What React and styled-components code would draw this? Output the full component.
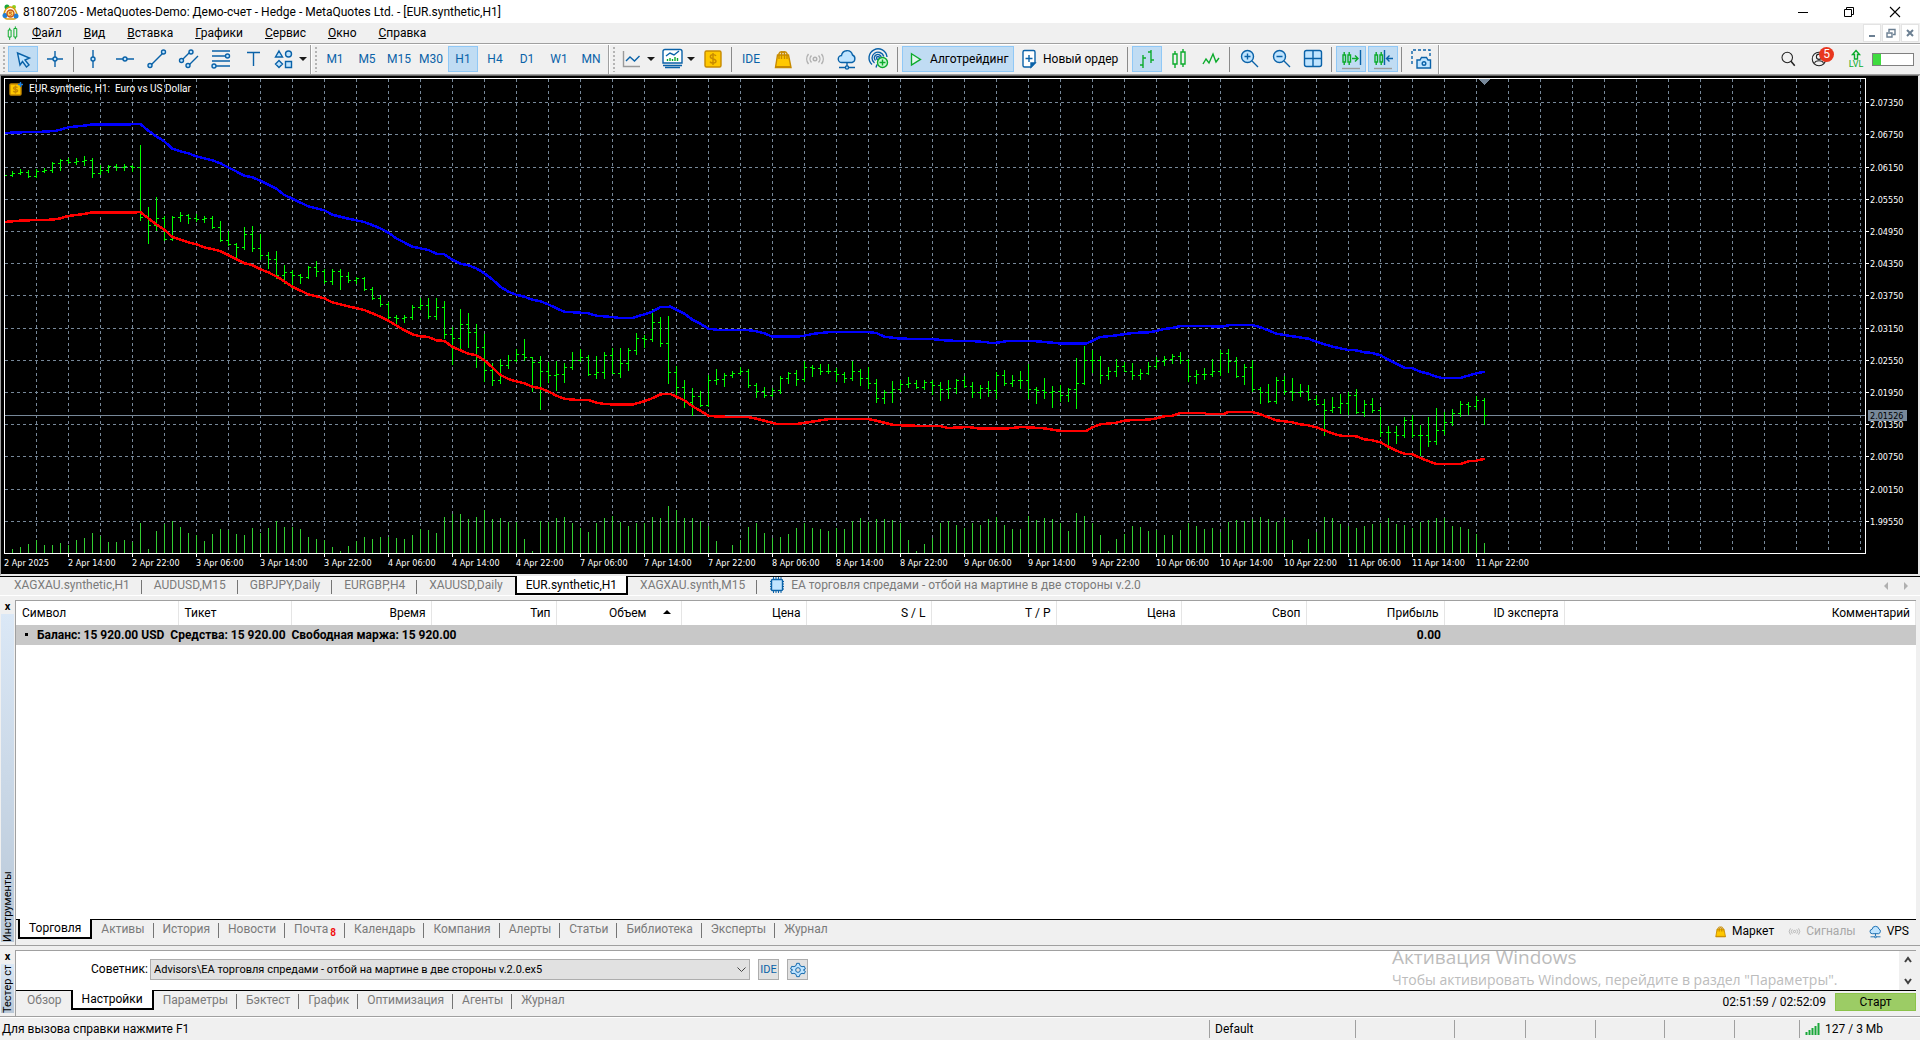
import React from "react";
import styled, { createGlobalStyle } from "styled-components";

const UI_FONT = 'Roboto, "Open Sans", "Noto Sans", sans-serif';
const CHART_FONT = '"DejaVu Sans Condensed", "Open Sans", sans-serif';
const BLUE = "#0a62a8";
const PALE = "#bfe4ff";
const GREEN = "#0cab2c";
const GRID = "#778899";

const GlobalStyle = createGlobalStyle`
  * { box-sizing: border-box; }
  body { margin: 0; background: #f0f0f0; color: #000; font: 12px/16px ${UI_FONT}; }
  button, select { font: inherit; color: inherit; margin: 0; }
  button { border: 0; background: none; padding: 0; }
`;

/* ---------- chart data ---------- */

// Every row is high, low, close; a bar opens at the close before it.
const scaleRows = (top, rows) => rows.map((r) => r.map((v) => top + Math.floor(v / 3)));

const BARS = [
  ...scaleRows(100, [
    [226, 226, 226], [215, 231, 220], [207, 225, 217], [210, 234, 229], [207, 234, 214], [204, 219, 211],
    [186, 219, 190], [177, 213, 181], [174, 192, 187], [174, 195, 184], [168, 198, 181], [174, 234, 220],
    [195, 225, 211], [195, 219, 199], [192, 213, 202], [192, 213, 199], [195, 216, 202], [135, 363, 352],
    [321, 432, 376], [291, 394, 355], [348, 424, 418], [348, 423, 352], [336, 366, 346], [342, 372, 355],
    [342, 366, 358], [348, 369, 355], [348, 387, 382], [363, 426, 421], [393, 438, 433], [429, 474, 442],
    [381, 450, 403], [378, 456, 445], [402, 480, 466], [456, 507, 478], [453, 537, 526], [495, 552, 517],
    [510, 567, 526], [522, 552, 532], [498, 537, 502], [483, 531, 514], [507, 552, 544], [507, 555, 514],
    [507, 570, 529], [516, 549, 541], [531, 552, 535], [531, 573, 568], [561, 600, 595], [585, 621, 613],
    [606, 657, 652], [645, 678, 655], [645, 669, 652], [615, 660, 622], [594, 630, 616], [594, 657, 649],
    [594, 660, 622], [603, 717, 703], [681, 795, 715], [627, 747, 673], [639, 744, 697], [672, 804, 742],
    [702, 846, 811], [789, 858, 841], [777, 852, 796], [765, 807, 781],
  ]),
  ...scaleRows(260, [
    [269, 307, 283], [237, 303, 292], [292, 396, 307], [288, 450, 334], [308, 369, 346], [303, 393, 343],
    [309, 369, 322], [276, 330, 300], [268, 308, 292], [285, 348, 343], [288, 357, 337], [276, 357, 286],
    [264, 344, 340], [264, 354, 310], [264, 333, 271], [219, 285, 235], [225, 265, 238], [147, 246, 187],
    [171, 261, 250], [168, 372, 337], [318, 405, 382], [360, 444, 427], [384, 468, 409], [393, 441, 436],
    [345, 441, 361], [327, 375, 358], [339, 381, 346], [333, 354, 340], [322, 346, 333], [327, 384, 376],
    [369, 414, 394], [381, 414, 406], [384, 411, 391], [348, 402, 355], [336, 372, 340], [330, 378, 358],
    [304, 366, 322], [315, 351, 324], [312, 345, 334], [312, 342, 334], [324, 366, 343], [336, 369, 355],
    [303, 364, 334], [327, 378, 355], [322, 387, 370], [357, 429, 415], [390, 432, 397], [363, 429, 388],
    [361, 397, 373], [351, 384, 370], [360, 387, 382], [360, 390, 367], [360, 405, 376], [366, 423, 388],
    [360, 417, 385], [357, 402, 361], [350, 385, 379], [366, 414, 397],
  ]),
  ...scaleRows(300, [
    [256, 297, 265], [243, 291, 271], [216, 299, 226], [210, 258, 250], [225, 261, 241], [213, 267, 241],
    [192, 297, 268], [261, 312, 271], [234, 297, 277], [258, 324, 274], [255, 306, 286], [264, 306, 268],
    [174, 327, 250], [138, 255, 181], [151, 219, 181], [168, 252, 226], [201, 240, 214], [177, 231, 199],
    [187, 217, 214], [189, 240, 226], [207, 240, 220], [186, 225, 199], [172, 207, 184], [168, 198, 178],
    [162, 192, 169], [156, 192, 181], [178, 246, 229], [210, 252, 223], [204, 240, 223], [177, 231, 214],
    [152, 228, 160], [147, 219, 184], [171, 234, 229], [192, 255, 202], [182, 276, 268], [261, 312, 277],
    [252, 309, 303], [231, 312, 241], [228, 285, 274], [234, 303, 277], [252, 291, 274], [255, 303, 298],
    [286, 316, 312], [297, 408, 331], [291, 339, 322], [282, 342, 310], [277, 347, 286], [267, 342, 337],
    [300, 351, 313], [294, 339, 331], [321, 411, 397], [378, 450, 397], [378, 432, 406], [351, 414, 361],
    [347, 414, 406], [375, 468, 406], [351, 441, 424], [324, 435, 391], [336, 405, 367], [327, 378, 340],
    [303, 351, 313], [306, 347, 319], [290, 330, 301], [294, 375, 346],
  ]),
];

const scaleList = (top, list) => list.map((v) => top + Math.floor(v / 3));

const VOLUMES = [
  ...scaleList(480, [
    219, 207, 201, 192, 180, 195, 195, 189, 195, 180, 174, 159, 169, 186, 186, 180, 186, 129, 207, 153, 132,
    124, 141, 159, 165, 183, 162, 147, 150, 162, 165, 144, 159, 144, 125, 141, 141, 147, 171, 177, 181, 201,
    213, 198, 183, 171, 177, 171, 171, 174, 177, 165, 147, 150, 159,
  ]),
  ...scaleList(260, [
    771, 762, 762, 777, 771, 750, 777, 774, 786, 788, 837, 873, 783, 786, 774, 771, 789, 804, 816, 789, 774,
    769, 786, 798, 789, 790, 771, 774, 738, 750, 774, 774, 784, 798, 843, 879, 855, 842, 801, 789, 819, 834,
    831, 822, 804, 790, 804, 807, 813, 804, 807, 783, 774, 786, 777, 777, 780, 790, 840, 873, 852, 834, 789,
    783, 795, 804, 789,
  ]),
  ...scaleList(300, [
    675, 657, 651, 675, 687, 687, 648, 660, 654, 657, 669, 693, 639, 648, 669, 705, 753, 717, 703, 678, 681,
    693, 692, 705, 705, 690, 669, 678, 687, 684, 696, 666, 660, 663, 657, 651, 657, 666, 655, 720, 756, 717,
    696, 651, 654, 672, 678, 684, 678, 672, 669, 654, 672, 675, 686, 666, 660, 654, 655, 678, 681, 687, 702,
    729,
  ]),
];

const segment = (left, stepX, top, pairs) => pairs.map(([x, y]) => [left + x / stepX, top + y / 3]);

const UPPER = [
  ...segment(0, 3, 100, [
    [13, 99], [61, 97], [133, 95], [170, 92], [205, 82], [250, 77], [280, 73], [350, 74], [421, 72], [445, 92],
    [469, 109], [493, 124], [517, 146], [541, 154], [565, 160], [589, 169], [637, 181], [661, 190], [685, 202],
    [733, 227], [757, 232], [781, 242], [829, 266], [853, 285], [877, 296], [925, 319], [973, 331], [997, 344],
    [1045, 356], [1093, 366], [1141, 385], [1165, 398], [1189, 415], [1237, 440], [1285, 450], [1309, 461],
    [1333, 463], [1357, 479], [1381, 491], [1405, 496], [1429, 505], [1453, 520], [1477, 538], [1501, 560],
    [1525, 575],
  ]),
  ...segment(440, 2.8, 260, [
    [213, 104], [236, 110], [259, 119], [281, 124], [303, 133], [326, 145], [348, 155], [393, 158], [415, 160],
    [438, 167], [482, 171], [505, 174], [538, 174], [572, 163], [594, 155], [617, 141], [645, 140], [662, 149],
    [684, 161], [707, 179], [729, 191], [751, 206], [780, 210], [860, 210], [886, 214], [908, 220], [931, 230],
    [998, 230], [1020, 227], [1042, 222], [1065, 219], [1095, 216], [1199, 216], [1222, 219], [1244, 230],
    [1289, 236], [1378, 237], [1423, 242], [1490, 243], [1535, 247],
  ]),
  ...segment(980, 2.8, 300, [
    [23, 129], [50, 128], [75, 123], [150, 123], [202, 128], [230, 131], [297, 131], [315, 122], [337, 111],
    [375, 107], [427, 99], [472, 97], [494, 93], [516, 87], [539, 84], [561, 78], [628, 78], [678, 80],
    [700, 75], [763, 75], [785, 82], [807, 91], [830, 101], [875, 109], [919, 116], [942, 125], [987, 140],
    [1031, 150], [1054, 151], [1076, 157], [1098, 159], [1121, 166], [1143, 179], [1188, 203], [1211, 205],
    [1233, 215], [1255, 221], [1278, 230], [1295, 234], [1345, 234], [1367, 227], [1390, 220], [1414, 215],
  ]),
];

const LOWER = [
  ...segment(0, 3, 100, [
    [13, 366], [61, 362], [109, 360], [157, 359], [181, 355], [205, 348], [253, 342], [270, 338], [397, 338],
    [421, 336], [445, 355], [469, 373], [493, 389], [517, 411], [541, 419], [565, 427], [589, 433], [613, 442],
    [661, 453], [709, 478], [733, 490], [757, 495], [781, 508], [805, 517], [829, 529], [853, 544], [877, 560],
    [925, 583], [973, 595], [997, 607], [1045, 619], [1093, 630], [1141, 650], [1165, 662], [1213, 691],
    [1237, 703], [1261, 709], [1285, 711], [1309, 721], [1333, 723], [1357, 740], [1381, 751], [1405, 761],
    [1429, 766], [1453, 781], [1477, 802], [1501, 825], [1525, 837],
  ]),
  ...segment(440, 2.8, 260, [
    [213, 364], [236, 370], [259, 380], [281, 385], [303, 394], [326, 407], [348, 416], [370, 419], [415, 420],
    [438, 428], [460, 432], [505, 434], [538, 434], [572, 424], [594, 415], [617, 403], [645, 402], [662, 410],
    [684, 421], [707, 439], [729, 452], [751, 467], [780, 470], [863, 471], [886, 476], [908, 482], [931, 489],
    [945, 492], [998, 492], [1031, 487], [1065, 481], [1090, 477], [1199, 477], [1222, 482], [1266, 494],
    [1311, 497], [1400, 498], [1423, 504], [1480, 501], [1513, 506],
  ]),
  ...segment(980, 2.8, 300, [
    [0, 386], [68, 386], [115, 381], [180, 385], [202, 389], [230, 393], [297, 393], [315, 382], [337, 373],
    [382, 368], [404, 362], [427, 360], [472, 359], [494, 355], [516, 349], [539, 347], [561, 339], [628, 339],
    [635, 342], [683, 342], [695, 336], [763, 336], [785, 343], [807, 352], [830, 361], [875, 367], [897, 373],
    [919, 376], [942, 382], [964, 391], [987, 400], [1009, 407], [1054, 409], [1076, 418], [1098, 421],
    [1121, 427], [1143, 440], [1166, 452], [1188, 461], [1211, 463], [1233, 474], [1255, 483], [1278, 492],
    [1345, 492], [1367, 484], [1390, 482], [1414, 476],
  ]),
];

const PRICES = [
  ["2.07350", 102], ["2.06750", 134], ["2.06150", 167], ["2.05550", 199], ["2.04950", 231], ["2.04350", 263],
  ["2.03750", 295], ["2.03150", 328], ["2.02550", 360], ["2.01950", 392], ["2.01350", 424], ["2.00750", 456],
  ["2.00150", 489], ["1.99550", 521],
];

const TIMES = [
  ["2 Apr 2025", 4],
  ...["2 Apr 14:00", "2 Apr 22:00", "3 Apr 06:00", "3 Apr 14:00", "3 Apr 22:00", "4 Apr 06:00", "4 Apr 14:00",
    "4 Apr 22:00", "7 Apr 06:00", "7 Apr 14:00", "7 Apr 22:00", "8 Apr 06:00", "8 Apr 14:00", "8 Apr 22:00",
    "9 Apr 06:00", "9 Apr 14:00", "9 Apr 22:00", "10 Apr 06:00", "10 Apr 14:00", "10 Apr 22:00", "11 Apr 06:00",
    "11 Apr 14:00", "11 Apr 22:00"].map((t, i) => [t, 68 + 64 * i]),
];

const barX = (i) => 4 + 8 * i;
const barPath = BARS.map(([h, l, c], i) => {
  const x = barX(i);
  const open = i ? `M${x - 2} ${BARS[i - 1][2] + 0.5}H${x}` : "";
  const stem = i ? `M${x + 0.5} ${h}V${l}` : "";
  return `${open}${stem}M${x + 1} ${c + 0.5}H${x + 3}`;
}).join("");
const volumePath = VOLUMES.map((v, i) => `M${barX(i) + 0.5} ${v}V553`).join("");
const bandPath = (pts) => "M" + pts.map(([x, y]) => `${x.toFixed(1)} ${y.toFixed(1)}`).join("L");
const gridV = Array.from({ length: 58 }, (_, i) => `M${36.5 + 32 * i} 79V553`).join("");
const gridH = PRICES.map(([, y]) => `M5 ${y + 0.5}H1865`).join("");

/* ---------- icons ---------- */

const Svg = styled.svg`
  display: block;
  flex: none;
  overflow: visible;
  fill: none;
  stroke: ${(p) => p.$c || BLUE};
  stroke-width: 1.4;
`;

const Icon = ({ size = 24, color, box = 24, children }) => (
  <Svg width={size} height={size} viewBox={`0 0 ${box} ${box}`} $c={color} aria-hidden="true">
    {children}
  </Svg>
);

const Bag = ({ size }) => (
  <Icon size={size} color="#c78a00">
    <path d="M6.500 8h11l2.500 12.500H4.500z" fill="#ffc800" />
    <path d="M8 12V6.500a3 3 0 0 1 5.500 0V12M10.500 12V6.500a3 3 0 0 1 5.500 0V12M4.500 19.800H20" />
  </Icon>
);
const Cloud = ({ size }) => (
  <Icon size={size}>
    <path d="M7 15.500a3.500 3.500 0 0 1-.500-7 5.600 5.600 0 0 1 11-.500 4 4 0 0 1-.500 7.500z" fill={PALE} />
    <path d="M12 15.500V19M4 20.500h6m4 0h6" />
    <circle cx="12" cy="20.500" r="1.600" fill={PALE} />
  </Icon>
);
const Waves = ({ size }) => (
  <Icon size={size} color="#b0b0b0">
    <circle cx="12" cy="12" r="1.800" />
    <path d="M8.500 8.500a5 5 0 0 0 0 7M15.500 8.500a5 5 0 0 1 0 7M5.500 7a8 8 0 0 0 0 10M18.500 7a8 8 0 0 1 0 10" />
  </Icon>
);
const Candles = ({ size }) => (
  <Icon size={size} color={GREEN}>
    <path d="M6 7h4v10H6zM8 4v3M8 17v4M14 5h4v12h-4zM16 2v3M16 17v3" />
  </Icon>
);

const ICONS = {
  cursor: <Icon><path d="M6.500 6l12 5-4.500 2 4 5-2.500 2-4-5.500-2.500 3.500z" fill={PALE} /></Icon>,
  cross: <Icon><path d="M12 4v6M12 14v6M4 12h6M14 12h6" /><circle cx="12" cy="12" r="2" fill={PALE} /></Icon>,
  vline: <Icon><path d="M12 3v7M12 14v7" /><circle cx="12" cy="12" r="2" fill={PALE} /></Icon>,
  hline: <Icon><path d="M3 12h7M14 12h7" /><circle cx="12" cy="12" r="2" fill={PALE} /></Icon>,
  trend: <Icon><path d="M6 18L18 6" /><circle cx="5" cy="18.500" r="2" fill={PALE} /><circle cx="18.500" cy="5" r="2" fill={PALE} /></Icon>,
  channel: (
    <Icon>
      <path d="M5 13l8-8M12 18l9-9" />
      <circle cx="4.500" cy="13.500" r="2" fill={PALE} /><circle cx="14" cy="5" r="2" fill={PALE} />
      <circle cx="11" cy="18.500" r="2" fill={PALE} />
    </Icon>
  ),
  fibo: (
    <Icon>
      <path d="M3 4h18M3 9h14M3 14h18M7 19h14" />
      <circle cx="18.500" cy="9" r="2" fill={PALE} /><circle cx="5" cy="19" r="2" fill={PALE} />
    </Icon>
  ),
  text: <Icon><path d="M6 5.500h13M12.500 5.500V19" /></Icon>,
  shapes: (
    <Icon>
      <path d="M7 4l3.500 6h-7zM7 13.500l3.500 3.500L7 20.500l-3.500-3.500zM13.500 14.500h6v6h-6z" fill={PALE} />
      <circle cx="16.500" cy="7" r="3" fill={PALE} />
    </Icon>
  ),
  linechart: <Icon><path d="M3.500 4v15.500H20" stroke="#9a9a9a" /><path d="M6 14l4-4 4.500 4 5-5" /></Icon>,
  indicators: (
    <Icon>
      <path d="M5 2.500h15a2 2 0 0 1 2 2V16H3V4.500a2 2 0 0 1 2-2z" fill="#fff" />
      <path d="M6 9l4-3 4 2 5-4M3 18.500h19M5 20.500h15" />
      <path d="M7.500 14v-2M10 14v-3M12.500 14v-2M15 14v-4M17.500 14v-3" stroke={GREEN} />
    </Icon>
  ),
  dollar: (
    <Icon color="#c78a00">
      <rect x="4" y="4" width="16" height="16" rx="1.500" fill="#ffc800" />
      <path d="M15 9c-1-1.800-5.700-2-5.700.8 0 2.800 5.700 1.600 5.700 4.400 0 2.400-5 2.400-6 .4M12 6v12" />
    </Icon>
  ),
  bag: <Bag />,
  waves: <Waves />,
  cloud: <Cloud />,
  radar: (
    <Icon>
      <circle cx="11" cy="11" r="1.500" />
      <path d="M7.500 16a6 6 0 1 1 9.300-6.500M8.500 13.500a3.500 3.500 0 1 1 5.800-3M5 17.500A9 9 0 1 1 20 10M10 17.500l-1 3" />
      <circle cx="15.500" cy="15.500" r="5" stroke={GREEN} fill="#c9f7cf" />
      <path d="M15.500 12.500v6M12.500 15.500h6" stroke={GREEN} />
    </Icon>
  ),
  play: <Icon size={18} color={GREEN}><path d="M6 5l12 7.500L6 20z" fill="#e2f6ee" strokeWidth="1.800" /></Icon>,
  order: (
    <Icon>
      <path d="M7.500 3.500h9a1.500 1.500 0 0 1 1.500 1.500v11l-4 4H7.500A1.500 1.500 0 0 1 6 18.500V5a1.500 1.500 0 0 1 1.500-1.500z" fill="#fff" />
      <path d="M14 20v-4h4z" fill={BLUE} />
      <path d="M12 8v7M8.500 11.500h7" />
    </Icon>
  ),
  bars: <Icon color={GREEN}><path d="M8 8v13M5 18h3M8 11h3M16 3v13M13 5h3M16 13h3" /></Icon>,
  candles: <Candles />,
  zigzag: <Icon color={GREEN}><path d="M4 17l3-5 3 4 4-9 3 8 3-4" /></Icon>,
  zoomin: <Icon><circle cx="10.500" cy="9.500" r="6" fill={PALE} /><path d="M10.500 6.500v6M7.500 9.500h6M15 14l6 6" /></Icon>,
  zoomout: <Icon><circle cx="10.500" cy="9.500" r="6" fill={PALE} /><path d="M7.500 9.500h6M15 14l6 6" /></Icon>,
  tiles: <Icon><rect x="3.500" y="3.500" width="17" height="16" rx="2" fill={PALE} /><path d="M12 3.500v16M3.500 11.500h17" /></Icon>,
  shiftEnd: (
    <Icon color={GREEN}>
      <path d="M4 8h2.500v7H4zM5.200 5v3M5.200 15v3M9 8h2.500v7H9zM10.200 5v3M10.200 15v3M13 11.500h6M16 8.500l3 3-3 3" />
      <path d="M21.500 3v15" stroke={BLUE} /><path d="M3 21.500h18" stroke="#9c9c9c" />
    </Icon>
  ),
  shift: (
    <Icon color={GREEN}>
      <path d="M4 8h2.500v7H4zM5.200 5v3M5.200 15v3M9 8h2.500v7H9zM10.200 5v3M10.200 15v3" />
      <path d="M13.500 3v15M22 11.500h-6M18.500 8.500l-3 3 3 3" stroke={BLUE} /><path d="M3 21.500h18" stroke="#9c9c9c" />
    </Icon>
  ),
  camera: (
    <Icon>
      <path d="M3 17V3h18v6" strokeDasharray="3 2" />
      <path d="M8 13h3l1.500-2.500h5L19 13h2.500v8H8z" fill={PALE} /><circle cx="15" cy="16.500" r="1.800" />
    </Icon>
  ),
};

/* ---------- window frame ---------- */

const Window = styled.div`
  display: flex;
  flex-direction: column;
  min-height: 100vh;
  overflow: hidden;
`;
const TitleBar = styled.header`
  display: flex;
  align-items: center;
  height: 23px;
  padding: 0 2px;
  background: #fff;
`;
const Title = styled.h1`
  flex: 1;
  margin: 0 0 0 4px;
  font-size: 12px;
  font-weight: 400;
  white-space: nowrap;
`;
const CaptionButton = styled.button`
  width: 46px;
  height: 22px;
  display: grid;
  place-items: center;
`;
const MenuBar = styled.nav`
  display: flex;
  align-items: center;
  height: 21px;
  padding-left: 4px;
  border-bottom: 1px solid #a0a0a0;
`;
const MenuItem = styled.button`
  padding: 0 11px;
  white-space: nowrap;
  &::first-letter { text-decoration: underline; }
`;
const Spacer = styled.span`
  flex: 1;
`;
const MdiButton = styled.button`
  display: grid;
  place-items: center;
  width: 18px;
  height: 18px;
  margin-right: 1px;
  background: #fff;
  border: 1px solid #e3e3e3;
`;

/* ---------- toolbar ---------- */

const Toolbar = styled.div`
  display: flex;
  align-items: center;
  gap: 2px;
  height: 31px;
  padding: 0 6px 1px 2px;
  border-top: 1px solid #fff;
  border-bottom: 1px solid #a0a0a0;
`;
const Grip = styled.i`
  flex: none;
  width: 4px;
  height: 26px;
  background: radial-gradient(circle, #b4b4b4 1px, transparent 1px) 0 0 / 4px 4px;
`;
const Divider = styled.i`
  display: flex;
  justify-content: flex-end;
  flex: none;
  width: 8px;
  height: 29px;
  padding-top: 1px;
  border-left: 1px solid #a0a0a0;
  box-shadow: inset 1px 0 #fff;
`;
const Separator = styled.i`
  flex: none;
  width: 1px;
  height: 25px;
  margin: 0 2px 0 1px;
  background: #8a8a8a;
`;
const ToolButton = styled.button`
  display: flex;
  align-items: center;
  justify-content: center;
  flex: none;
  height: 26px;
  min-width: 30px;
  white-space: nowrap;
  color: ${BLUE};
  background: ${(p) => (p.$on ? "#c0dcf3" : "transparent")};
  border: 1px solid ${(p) => (p.$on ? "#90c8f6" : "transparent")};
`;
const DropButton = styled(ToolButton)`
  width: 38px;
  gap: 3px;
`;
const WideButton = styled(ToolButton)`
  justify-content: flex-start;
  gap: ${(p) => (p.$on ? 5 : 2)}px;
  min-width: ${(p) => (p.$on ? 112 : 108)}px;
  padding: 0 4px 0 ${(p) => (p.$on ? 4 : 0)}px;
  color: #000;
`;
const Caret = styled.i`
  border: 4px solid transparent;
  border-top-color: #1a1a1a;
  border-bottom: 0;
`;
const AccountBadge = styled.span`
  position: relative;
`;
const Count = styled.b`
  position: absolute;
  top: -3px;
  right: -6px;
  width: 15px;
  height: 15px;
  border-radius: 8px;
  background: #e8371f;
  color: #fff;
  font-size: 12px;
  line-height: 15px;
  font-weight: 400;
  text-align: center;
`;
const Level = styled.span`
  display: flex;
  flex-direction: column;
  align-items: center;
  width: 20px;
  margin: 0 6px 0 18px;
  font-size: 9px;
  line-height: 9px;
  color: ${GREEN};
`;
const LevelMeter = styled.span`
  width: 42px;
  height: 13px;
  background: linear-gradient(90deg, #3fdc3f 8px, #fff 8px);
  border: 1px solid #808080;
`;
const AccountTools = styled.div`
  display: flex;
  align-items: center;
  margin-left: auto;
`;
const Search = styled.button`
  margin-right: 13px;
`;

/* ---------- chart ---------- */

const ChartFrame = styled.section`
  display: grid;
  grid-template: 476px 20px / minmax(0, 1fr) 52px;
  padding: 2px 0 0 3px;
  background: #000;
  border: solid;
  border-width: 1px 2px 2px 1px;
  border-color: #696969 #e8e8e8 #e8e8e8 #a0a0a0;
  overflow: hidden;
`;
const ChartBox = styled.div`
  position: relative;
  border: 1px solid #fff;
  overflow: hidden;
`;
const Drawing = styled.svg`
  display: block;
  width: 100%;
  height: 100%;
  overflow: ${(p) => (p.$spill ? "visible" : "hidden")};
  fill: none;
  shape-rendering: crispEdges;
  text {
    fill: #fff;
    font: 9px ${CHART_FONT};
  }
`;
const ChartCaption = styled.div`
  position: absolute;
  left: 4px;
  top: 2px;
  display: flex;
  align-items: center;
  gap: 6px;
  color: #fff;
  font-size: 10px;
  white-space: pre;
`;

function Chart() {
  return (
    <ChartFrame>
      <ChartBox>
        <Drawing role="img" aria-label="EUR.synthetic, H1">
          <g transform="translate(-5 -79)">
            <path d={gridV + gridH} stroke={GRID} strokeDasharray="3 3" />
            <path d="M5 415.5H2400" stroke={GRID} />
            <path d={volumePath} stroke="#32cd32" />
            <path d={barPath} stroke="#00ff00" />
            <path d={bandPath(UPPER)} stroke="#0000ff" strokeWidth="2.5" />
            <path d={bandPath(LOWER)} stroke="#ff0000" strokeWidth="2.5" />
            <path d="M1479 79h11l-5.500 6z" fill={GRID} />
          </g>
        </Drawing>
        <ChartCaption>
          <Icon size={14} box={14} color="#c78a00">
            <rect x="1" y="2" width="11" height="11" rx="1" fill="#ffc800" />
            <path d="M8.500 5.500c-1-1-4-.8-4 .8 0 1.700 4.200.8 4.200 2.500 0 1.500-3.500 1.500-4.400.2M6.500 3.500v8" />
            <path d="M9 2.500h5M11.500 0v5" stroke="#1c7fe0" />
          </Icon>
          <span>{"EUR.synthetic, H1:  Euro vs US Dollar"}</span>
        </ChartCaption>
      </ChartBox>
      <Drawing $spill>
        <g transform="translate(-1866 -78)">
          {PRICES.map(([p, y]) => (
            <g key={p}>
              <path d={`M1866 ${y + 0.5}h3`} stroke="#fff" />
              <text x="1870" y={y + 4}>{p}</text>
            </g>
          ))}
          <path d="M1868 410h39v11h-39z" fill={GRID} />
          <text x="1870" y="419" style={{ fill: "#000" }}>2.01526</text>
        </g>
      </Drawing>
      <Drawing $spill>
        <g transform="translate(-4 -554)">
          {TIMES.map(([t, x]) => (
            <g key={t}>
              {x > 4 && <path d={`M${x + 0.5} 554v3`} stroke="#fff" />}
              <text x={x} y="566">{t}</text>
            </g>
          ))}
        </g>
      </Drawing>
    </ChartFrame>
  );
}

/* ---------- tabs ---------- */

const ChartTabs = styled.div`
  display: flex;
  align-items: stretch;
  height: 20px;
  margin-bottom: 4px;
  padding-left: 2px;
  border-top: 1px solid #000;
  border-bottom: 1px solid #fff;
  white-space: nowrap;
`;
const Tab = styled.button`
  display: flex;
  align-items: center;
  gap: 6px;
  position: relative;
  padding: 0 ${(p) => (p.$wide ? 12 : 9)}px ${(p) => (p.$on ? 0 : 2)}px;
  color: ${(p) => (p.$on ? "#000" : "#7a7a7a")};
  background: ${(p) => (p.$on ? "#fff" : "transparent")};
  border: ${(p) => (p.$on ? "solid #000" : "0")};
  border-width: ${(p) => (p.$on ? "0 2px 2px 2px" : "0")};
  ${(p) => p.$on && "margin-top: -1px;"}
  ${(p) => p.$bar && `
    &::after { content: ""; position: absolute; right: 0; top: 3px; bottom: 1px; width: 1px; background: #757575; }
  `}
`;
const Arrow = styled.i`
  align-self: center;
  margin-right: ${(p) => (p.$left ? 16 : 12)}px;
  border: 4px solid transparent;
  ${(p) => (p.$left ? "border-right-color: #b0b0b0; border-left: 0;" : "border-left-color: #b0b0b0; border-right: 0;")}
`;
const Mail = styled.sub`
  margin-left: -4px;
  color: #f01010;
  font-size: 10px;
  line-height: 8px;
  font-weight: 700;
  padding-top: 8px;
`;

/* ---------- docked panels ---------- */

const Dock = styled.section`
  display: flex;
  ${(p) => (p.$grow ? "flex: 1;" : "flex: none;")}
  margin-bottom: ${(p) => (p.$grow ? 4 : 0)}px;
  border-bottom: 1px solid #a0a0a0;
`;
const Side = styled.div`
  display: flex;
  flex-direction: column;
  flex: none;
  width: 15px;
  padding: 0 1px 3px 1px;
`;
const CloseMark = styled.button`
  height: 14px;
  font: 700 11px/10px ${UI_FONT};
`;
const SideLabel = styled.div`
  flex: 1 1 0;
  min-height: 0;
  overflow: hidden;
  writing-mode: vertical-rl;
  transform: rotate(180deg);
  font-size: 11px;
  line-height: 13px;
  white-space: nowrap;
  background: linear-gradient(0deg, #dbe8f6, #b9c8d8);
`;
const Body = styled.div`
  display: flex;
  flex-direction: column;
  flex: 1;
  min-width: 0;
  margin-right: 4px;
  border-top: 1px solid #a0a0a0;
  border-left: 1px solid #a0a0a0;
`;
const Client = styled.div`
  position: relative;
  display: flex;
  flex: 1;
  min-height: ${(p) => p.$h || 0}px;
  background: #fff;
`;
const TabStrip = styled.div`
  display: flex;
  height: 26px;
  padding: 0 0 6px 2px;
  border-top: 1px solid #000;
  white-space: nowrap;
`;
const Service = styled.button`
  display: flex;
  align-items: center;
  gap: 4px;
  height: 22px;
  margin-right: ${(p) => p.$gap}px;
  color: ${(p) => (p.$off ? "#a8a8a8" : "#000")};
`;

const Table = styled.table`
  width: 100%;
  align-self: flex-start;
  table-layout: fixed;
  border-collapse: collapse;
  th, td {
    padding: 0 5px 0 6px;
    text-align: right;
    white-space: nowrap;
  }
  th {
    height: 24px;
    padding-bottom: 1px;
    font-weight: 400;
    border-right: 1px solid #e5e5e5;
  }
  th.left, td.left { text-align: left; }
  td {
    height: 20px;
    padding: 0 3px 1px;
    font-weight: 700;
    background: #c8c8c8;
  }
`;
const SortMark = styled.i`
  display: inline-block;
  margin: 0 5px 3px 16px;
  border: 4px solid transparent;
  border-bottom-color: #000;
  border-top: 0;
`;
const Bullet = styled.i`
  display: inline-block;
  width: 3px;
  height: 3px;
  margin: 0 9px 3px 6px;
  background: #000;
`;

const COLUMNS = [
  ["Символ", 162], ["Тикет", 113], ["Время", 140], ["Тип", 125], ["Объем", 125], ["Цена", 125], ["S / L", 125],
  ["T / P", 125], ["Цена", 125], ["Своп", 125], ["Прибыль", 138], ["ID эксперта", 120], ["Комментарий", 0],
];
const Col = styled.col`
  width: ${(p) => (p.$w ? `${p.$w}px` : "auto")};
`;

function TradeTable() {
  return (
    <Table>
      <colgroup>{COLUMNS.map(([n, w], i) => <Col key={i} $w={w} />)}</colgroup>
      <thead>
        <tr>
          {COLUMNS.map(([n], i) => (
            <th key={i} scope="col" className={i < 2 ? "left" : undefined}>
              {n}{n === "Объем" && <SortMark />}
            </th>
          ))}
        </tr>
      </thead>
      <tbody>
        <tr>
          <td className="left" colSpan={10}>
            <Bullet />Баланс: 15 920.00 USD&nbsp; Средства: 15 920.00&nbsp; Свободная маржа: 15 920.00
          </td>
          <td>0.00</td>
          <td colSpan={2} />
        </tr>
      </tbody>
    </Table>
  );
}

/* ---------- tester ---------- */

const Form = styled.form`
  display: flex;
  align-items: flex-start;
  flex: 1;
  padding: 8px 0 0 75px;
`;
const FieldLabel = styled.label`
  width: 59px;
  line-height: 20px;
`;
const SelectWrap = styled.span`
  position: relative;
  width: 600px;
  svg { position: absolute; right: 4px; top: 6px; pointer-events: none; }
`;
const Select = styled.select`
  appearance: none;
  display: block;
  width: 100%;
  height: 21px;
  padding: 0 20px 0 3px;
  border: 1px solid #adadad;
  border-radius: 0;
  background: #e1e1e1;
  font-size: 11px;
`;
const SmallButton = styled.button`
  display: grid;
  place-items: center;
  width: 21px;
  height: 21px;
  margin-left: 8px;
  border: 1px solid #adadad;
  background: #e1e1e1;
  color: ${BLUE};
  font-size: 11px;
`;
const ScrollBar = styled.div`
  display: flex;
  flex-direction: column;
  justify-content: space-between;
  align-items: center;
  width: 17px;
  padding: 5px 0;
  background: #f0f0f0;
`;
const Watermark = styled.p`
  position: absolute;
  right: 70px;
  top: -6px;
  width: 454px;
  margin: 0;
  color: #bcbcbc;
  white-space: nowrap;
  font: 14px/20px "Open Sans", sans-serif;
  strong { display: block; font-size: 19px; line-height: 25px; font-weight: 400; }
`;
const Timer = styled.span`
  margin: 3px 9px 0 auto;
`;
const Start = styled.button`
  width: 81px;
  height: 18px;
  margin-top: 2px;
  background: #9ccc65;
  border: 1px solid #8bc34a;
`;

/* ---------- status bar ---------- */

const StatusBar = styled.footer`
  display: flex;
  align-items: center;
  height: 23px;
  padding-left: 2px;
  border-top: 1px solid #fff;
`;
const Cell = styled.span`
  display: flex;
  align-items: center;
  gap: 6px;
  flex: none;
  width: ${(p) => p.$w}px;
  height: 18px;
  padding-left: 5px;
  border-left: 1px solid #a0a0a0;
`;

const Tool = ({ name, label, on }) => (
  <ToolButton type="button" aria-label={label} $on={on}>{ICONS[name]}</ToolButton>
);

const TERMINAL_TABS = ["Активы", "История", "Новости", "Почта", "Календарь", "Компания", "Алерты", "Статьи",
  "Библиотека", "Эксперты", "Журнал"];
const TESTER_TABS = ["Параметры", "Бэктест", "График", "Оптимизация", "Агенты", "Журнал"];

export default function App() {
  return (
    <Window>
      <GlobalStyle />
      <TitleBar>
        <Icon size={17} box={17}>
          <circle cx="5" cy="4" r="2.500" fill="#18a83c" stroke="none" />
          <circle cx="12" cy="4" r="2" fill="#8bd01c" stroke="none" />
          <path d="M2 11c1-5 4-7 6.500-7s5 2 6.500 7c.5 3-1 5-3 5H5c-2 0-3.500-2-3-5z" fill="#fff" stroke="#d89c10" />
          <circle cx="3" cy="12.500" r="2.500" fill="#1f7fd6" stroke="none" />
          <circle cx="14" cy="13" r="2.500" fill="#1f7fd6" stroke="none" />
          <circle cx="8.500" cy="10.500" r="3.500" fill="#ffdd70" stroke="#c8571b" />
          <path d="M10 9.200H7.500v1.300c3-.5 3 2.500 0 1.700" stroke="#c8571b" strokeWidth="1" />
        </Icon>
        <Title>81807205 - MetaQuotes-Demo: Демо-счет - Hedge - MetaQuotes Ltd. - [EUR.synthetic,H1]</Title>
        <CaptionButton type="button" aria-label="Свернуть">
          <Icon size={10} box={10} color="#000"><path d="M0 5.500h10" strokeWidth="1" /></Icon>
        </CaptionButton>
        <CaptionButton type="button" aria-label="Развернуть">
          <Icon size={10} box={10} color="#000"><path d="M.5 2.500h7v7h-7zM2.500 2.500v-2h7v7h-2" strokeWidth="1" /></Icon>
        </CaptionButton>
        <CaptionButton type="button" aria-label="Закрыть">
          <Icon size={10} box={10} color="#000"><path d="M0 0l10 10M10 0L0 10" strokeWidth="1.100" /></Icon>
        </CaptionButton>
      </TitleBar>

      <MenuBar>
        <Candles size={17} />
        {["Файл", "Вид", "Вставка", "Графики", "Сервис", "Окно", "Справка"].map((m) => (
          <MenuItem key={m} type="button">{m}</MenuItem>
        ))}
        <Spacer />
        <MdiButton type="button" aria-label="Свернуть окно">
          <Icon size={10} box={10} color="#6b7f92"><path d="M2 8h6" strokeWidth="2" /></Icon>
        </MdiButton>
        <MdiButton type="button" aria-label="Восстановить окно">
          <Icon size={10} box={10} color="#6b7f92"><path d="M1 5h5v4H1zM3 4V1.500h6v5H7" /></Icon>
        </MdiButton>
        <MdiButton type="button" aria-label="Закрыть окно">
          <Icon size={10} box={10} color="#6b7f92"><path d="M2 2l6 6M8 2L2 8" strokeWidth="2" /></Icon>
        </MdiButton>
      </MenuBar>

      <Toolbar>
        <Grip />
        <Tool name="cursor" label="Курсор" on />
        <Tool name="cross" label="Перекрестие" />
        <Separator />
        <Tool name="vline" label="Вертикальная линия" />
        <Tool name="hline" label="Горизонтальная линия" />
        <Tool name="trend" label="Трендовая линия" />
        <Tool name="channel" label="Канал" />
        <Tool name="fibo" label="Фибоначчи" />
        <Tool name="text" label="Текст" />
        <DropButton type="button" aria-label="Фигуры">{ICONS.shapes}<Caret /></DropButton>
        <Divider><Grip /></Divider>
        {["M1", "M5", "M15", "M30", "H1", "H4", "D1", "W1", "MN"].map((t) => (
          <ToolButton key={t} type="button" $on={t === "H1"}>{t}</ToolButton>
        ))}
        <Divider><Grip /></Divider>
        <DropButton type="button" aria-label="График">{ICONS.linechart}<Caret /></DropButton>
        <DropButton type="button" aria-label="Индикаторы">{ICONS.indicators}<Caret /></DropButton>
        <Tool name="dollar" label="Символы" />
        <Separator />
        <ToolButton type="button">IDE</ToolButton>
        <Tool name="bag" label="Маркет" />
        <Tool name="waves" label="Сигналы" />
        <Tool name="cloud" label="VPS" />
        <Tool name="radar" label="Копирование" />
        <Separator />
        <WideButton type="button" $on>{ICONS.play}Алготрейдинг</WideButton>
        <WideButton type="button">{ICONS.order}Новый ордер</WideButton>
        <Separator />
        <Tool name="bars" label="Бары" on />
        <Tool name="candles" label="Свечи" />
        <Tool name="zigzag" label="Линия" />
        <Separator />
        <Tool name="zoomin" label="Увеличить" />
        <Tool name="zoomout" label="Уменьшить" />
        <Tool name="tiles" label="Окна плиткой" />
        <Separator />
        <Tool name="shiftEnd" label="Автопрокрутка" on />
        <Tool name="shift" label="Сдвиг графика" on />
        <Separator />
        <Tool name="camera" label="Снимок" />
        <Divider />
        <AccountTools>
          <Search type="button" aria-label="Поиск">
            <Icon size={18} color="#222"><circle cx="11" cy="10" r="7" /><path d="M16 15l5 6" strokeWidth="2" /></Icon>
          </Search>
          <AccountBadge>
            <Icon size={18} color="#222"><circle cx="12" cy="12" r="9" /><circle cx="12" cy="9" r="3.500" /><path d="M6 18c1-5 11-5 12 0" /></Icon>
            <Count>5</Count>
          </AccountBadge>
          <Level>
            <Icon size={10} box={10} color={GREEN}><path d="M5 .500l3.500 4H6.500V9h-3V4.500h-2z" /></Icon>
            LVL
          </Level>
          <LevelMeter />
        </AccountTools>
      </Toolbar>

      <Chart />

      <ChartTabs>
        {["XAGXAU.synthetic,H1", "AUDUSD,M15", "GBPJPY,Daily", "EURGBP,H4"].map((t) => (
          <Tab key={t} type="button" $wide $bar>{t}</Tab>
        ))}
        <Tab type="button" $wide>XAUUSD,Daily</Tab>
        <Tab type="button" $on>EUR.synthetic,H1</Tab>
        <Tab type="button" $wide $bar>XAGXAU.synth,M15</Tab>
        <Tab type="button" $wide>
          <Icon size={16} box={16}>
            <path d="M4.500 0v16M7 0v16M9.500 0v16M12 0v16M1 4.500h14M1 7h14M1 9.500h14M1 12h14" strokeWidth="1" />
            <rect x="2.500" y="2.500" width="11" height="11" rx="1" fill={PALE} />
          </Icon>
          EA торговля спредами - отбой на мартине в две стороны v.2.0
        </Tab>
        <Spacer />
        <Arrow $left />
        <Arrow />
      </ChartTabs>

      <Dock $grow>
        <Side>
          <CloseMark type="button" aria-label="Закрыть панель">x</CloseMark>
          <SideLabel>Инструменты</SideLabel>
        </Side>
        <Body>
          <Client><TradeTable /></Client>
          <TabStrip>
            <Tab type="button" $on>Торговля</Tab>
            {TERMINAL_TABS.map((t) => (
              <Tab key={t} type="button" $bar={t !== "Журнал"}>{t}{t === "Почта" && <Mail>8</Mail>}</Tab>
            ))}
            <Spacer />
            <Service type="button" $gap={13}><Bag size={15} />Маркет</Service>
            <Service type="button" $gap={12} $off><Waves size={15} />Сигналы</Service>
            <Service type="button" $gap={7}><Cloud size={15} />VPS</Service>
          </TabStrip>
        </Body>
      </Dock>

      <Dock>
        <Side>
          <CloseMark type="button" aria-label="Закрыть тестер">x</CloseMark>
          <SideLabel>Тестер ст</SideLabel>
        </Side>
        <Body>
          <Client $h={39}>
            <Form>
              <FieldLabel htmlFor="expert">Советник:</FieldLabel>
              <SelectWrap>
                <Select id="expert" defaultValue="ea">
                  <option value="ea">{"Advisors\\EA торговля спредами - отбой на мартине в две стороны v.2.0.ex5"}</option>
                </Select>
                <Icon size={9} box={9} color="#444"><path d="M.5 2.500l4 4 4-4" strokeWidth="1" /></Icon>
              </SelectWrap>
              <SmallButton type="button">IDE</SmallButton>
              <SmallButton type="button" aria-label="Настройки советника">
                <Icon size={16}>
                  <path d="M10 2h4l1 3.500 3 1.500 3.500-.5 1.500 4L20 12l3 2-1.500 3.500-3.500-.5-3 1.500-1 3.500h-4l-1-3.500L6 17l-3.500.5L1 14l3-2-3-1.500 1.500-4L6 7l3-1.500z" fill={PALE} />
                  <circle cx="12" cy="12" r="3.500" fill="#e1e1e1" />
                </Icon>
              </SmallButton>
            </Form>
            <Watermark>
              <strong>Активация Windows</strong>
              Чтобы активировать Windows, перейдите в раздел "Параметры".
            </Watermark>
            <ScrollBar>
              <Icon size={8} box={8} color="#404040"><path d="M1 6l3-4 3 4" strokeWidth="2" /></Icon>
              <Icon size={8} box={8} color="#404040"><path d="M1 2l3 4 3-4" strokeWidth="2" /></Icon>
            </ScrollBar>
          </Client>
          <TabStrip>
            <Tab type="button">Обзор</Tab>
            <Tab type="button" $on>Настройки</Tab>
            {TESTER_TABS.map((t) => (
              <Tab key={t} type="button" $bar={t !== "Журнал"}>{t}</Tab>
            ))}
            <Timer>02:51:59 / 02:52:09</Timer>
            <Start type="button">Старт</Start>
          </TabStrip>
        </Body>
      </Dock>

      <StatusBar>
        <span>Для вызова справки нажмите F1</span>
        <Spacer />
        <Cell $w={146}>Default</Cell>
        <Cell $w={99} />
        <Cell $w={71} />
        <Cell $w={70} />
        <Cell $w={69} />
        <Cell $w={70} />
        <Cell $w={65} />
        <Cell $w={121}>
          <Icon size={14} box={14} color="#1aa83a">
            <path d="M1.500 10v3M4.500 8v5M7.500 6v7M10.500 4v9M13.500 1v12" strokeWidth="2" />
          </Icon>
          127 / 3 Mb
        </Cell>
      </StatusBar>
    </Window>
  );
}
